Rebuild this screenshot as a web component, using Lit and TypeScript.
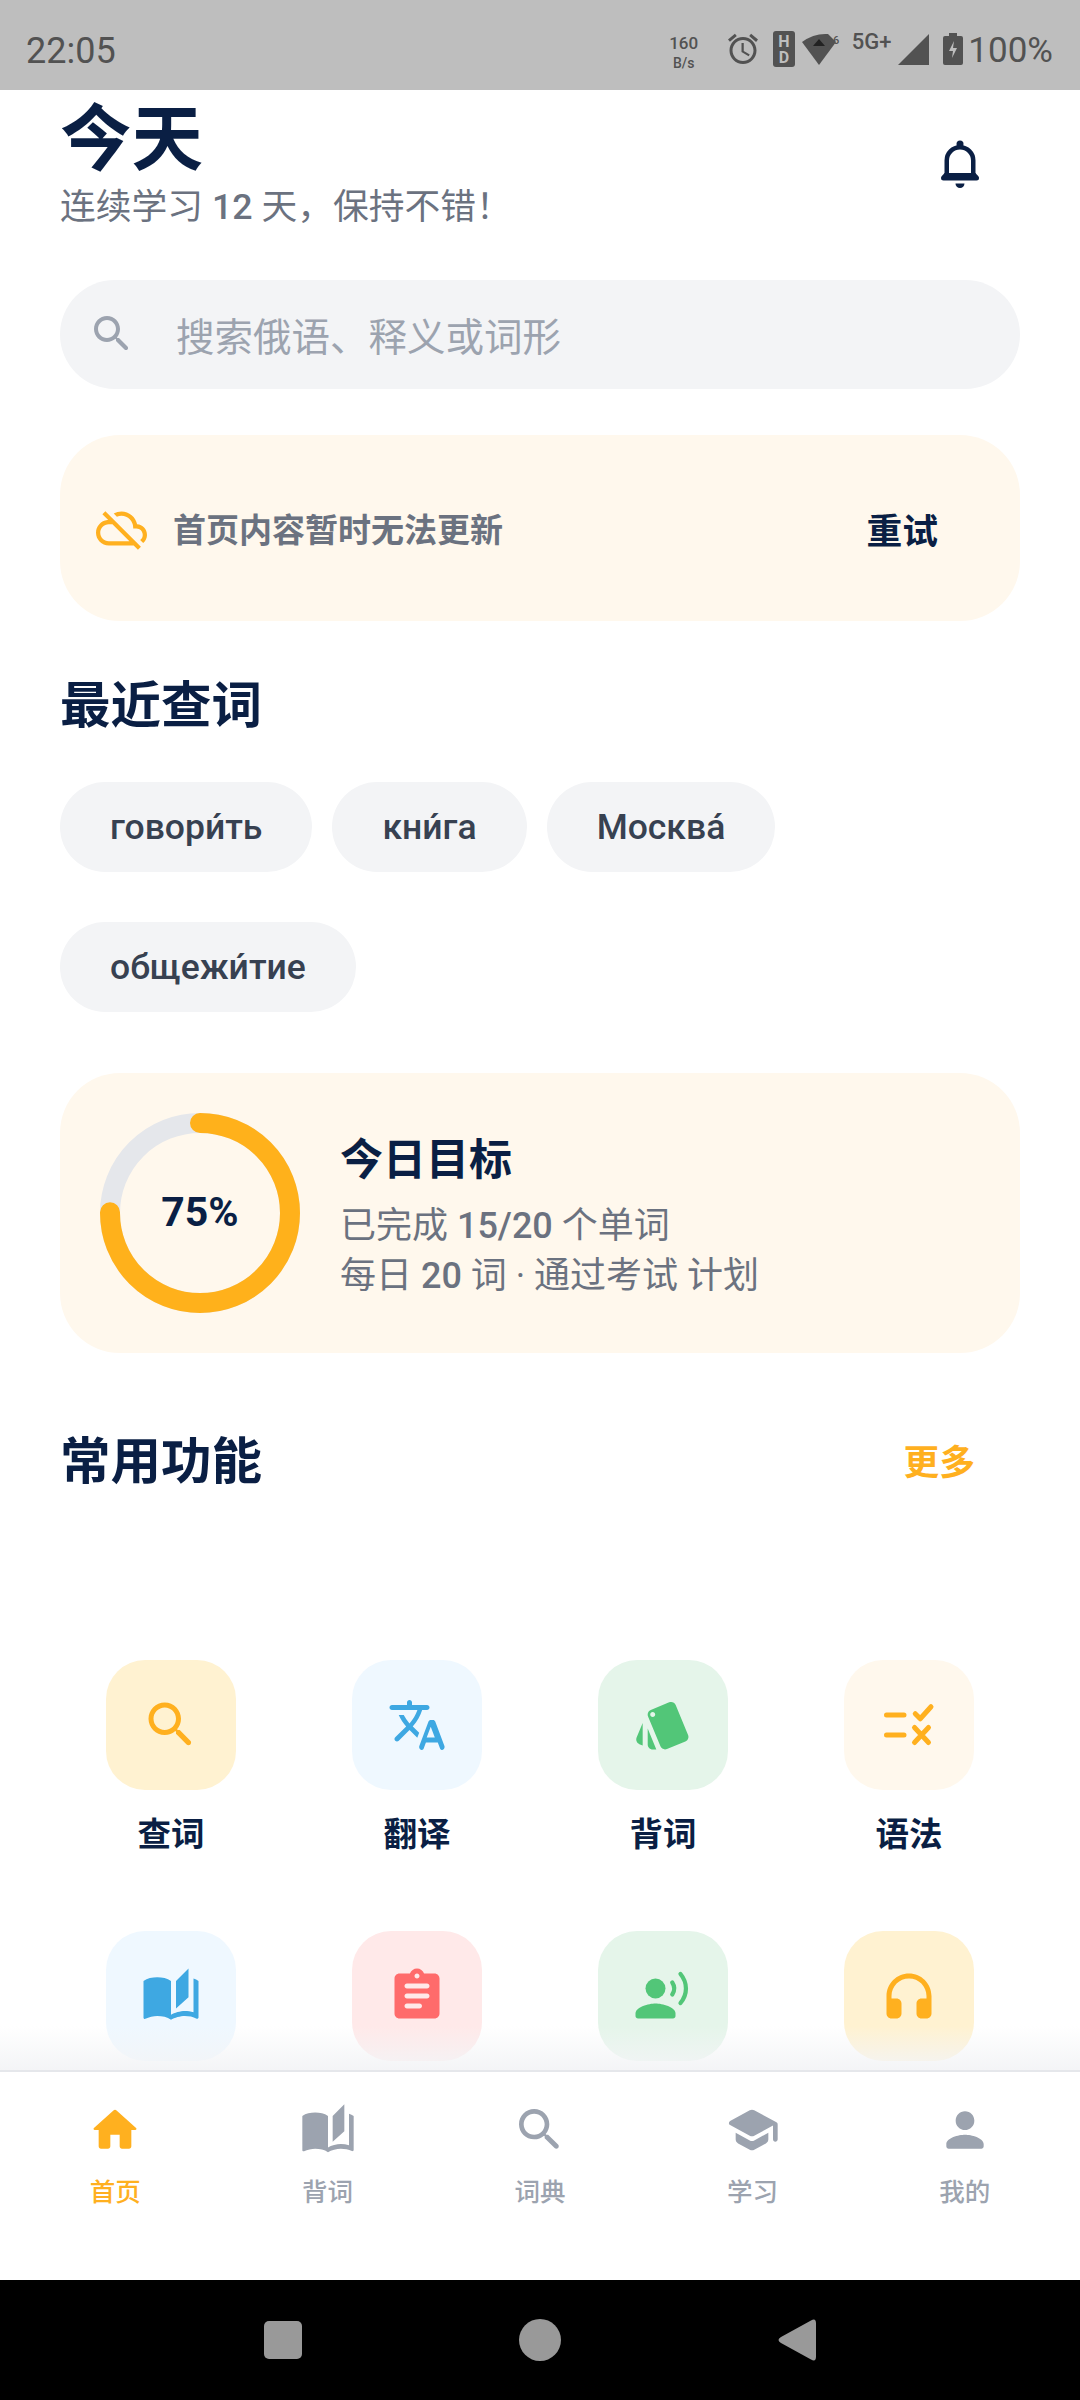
import { LitElement, html, css, svg } from "lit";
import { customElement } from "lit/decorators.js";

const ICONS: Record<string, unknown> = {
  search: svg`<path d="M15.5 14h-.79l-.28-.27C15.41 12.59 16 11.11 16 9.5 16 5.91 13.09 3 9.5 3S3 5.91 3 9.5 5.91 16 9.5 16c1.61 0 3.09-.59 4.23-1.57l.27.28v.79l4.25 4.25c.41.41 1.08.41 1.49 0 .41-.41.41-1.08 0-1.49L15.5 14zm-6 0C7.01 14 5 11.99 5 9.5S7.01 5 9.5 5 14 7.01 14 9.5 11.99 14 9.5 14z"/>`,
  cloudOff: svg`<path d="M24 15c0-2.64-2.05-4.78-4.65-4.96C18.67 6.59 15.64 4 12 4c-1.33 0-2.57.36-3.65.97l1.49 1.49C10.51 6.17 11.23 6 12 6c3.04 0 5.5 2.46 5.5 5.5v.5H19c1.66 0 3 1.34 3 3 0 .99-.48 1.85-1.21 2.4l1.41 1.41c1.09-.92 1.8-2.27 1.8-3.81zM4.41 3.86L3 5.27l2.77 2.77h-.42C2.34 8.36 0 10.91 0 14c0 3.31 2.69 6 6 6h11.73l2 2 1.41-1.41L4.41 3.86zM6 18c-2.21 0-4-1.79-4-4s1.79-4 4-4h1.73l8 8H6z"/>`,
  translate: svg`<path d="M12.87 15.07l-2.54-2.51.03-.03c1.74-1.94 2.98-4.17 3.71-6.53H16c.55 0 1-.45 1-1s-.45-.99-1-.99h-6V3c0-.55-.45-1-1-1s-1 .45-1 1v1H2c-.55 0-1 .45-1 1s.45.99 1 .99h10.17C11.5 7.92 10.44 9.75 9 11.35 8.07 10.32 7.3 9.19 6.69 8h-2c.73 1.63 1.73 3.17 2.98 4.56l-4.38 4.32c-.4.39-.4 1.03 0 1.42.39.39 1.02.39 1.42 0L9 14l3.11 3.11.76-2.04zM17.5 10c-.4 0-.76.25-.9.63l-3.67 9.8c-.24.61.22 1.57.87 1.57.39 0 .74-.24.88-.61l.89-2.39h4.75l.9 2.39c.14.37.49.61.88.61.65 0 1.11-.96.87-1.57l-3.67-9.8c-.14-.38-.5-.63-.9-.63h-.9zm-1.62 7l1.62-4.33L19.12 17h-3.24z"/>`,
  style: svg`<path d="M2.53 19.65l1.34.56v-9.03l-2.43 5.86c-.41 1.02.08 2.19 1.09 2.61zm19.5-3.7L17.07 3.98c-.31-.75-1.04-1.21-1.81-1.23-.26 0-.53.04-.79.15L7.1 5.95c-.75.31-1.21 1.03-1.23 1.8-.01.27.04.54.15.8l4.96 11.97c.31.76 1.05 1.22 1.83 1.23.26 0 .52-.05.77-.15l7.36-3.05c1.02-.42 1.51-1.59 1.09-2.6zM7.88 8.75c-.55 0-1-.45-1-1s.45-1 1-1 1 .45 1 1-.45 1-1 1zm-2 11c0 1.1.9 2 2 2h1.45l-3.45-8.34v6.34z"/>`,
  rule: svg`<path fill="none" stroke="currentColor" stroke-width="2" stroke-linecap="round" stroke-linejoin="round" d="M3 8h7M3 16h7M14.5 7.5l2 2 4.3-4.8M14.2 13l5.6 6M19.8 13l-5.6 6"/>`,
  stories: svg`<path d="M19 1l-5 5v11l5-4.5V1zM1 6v14.65c0 .25.25.5.5.5.1 0 .15-.05.25-.05C3.1 20.45 5.05 20 6.5 20c1.95 0 4.05.4 5.5 1.5V6c-1.45-1.1-3.55-1.5-5.5-1.5S2.45 4.9 1 6zm22 13.5V6c-.6-.45-1.25-.75-2-1v13.5c-1.1-.35-2.3-.5-3.5-.5-1.7 0-4.15.65-5.5 1.5v2c1.35-.85 3.8-1.5 5.5-1.5 1.65 0 3.35.3 4.75 1.05.1.05.15.05.25.05.25 0 .5-.25.5-.5v-1.1z"/>`,
  assignment: svg`<path fill-rule="evenodd" d="M19 3h-4.18C14.4 1.84 13.3 1 12 1c-1.3 0-2.4.84-2.82 2H5c-1.1 0-2 .9-2 2v14c0 1.1.9 2 2 2h14c1.1 0 2-.9 2-2V5c0-1.1-.9-2-2-2zm-7 0c.55 0 1 .45 1 1s-.45 1-1 1-1-.45-1-1 .45-1 1-1zM8 7h8c.55 0 1 .45 1 1s-.45 1-1 1H8c-.55 0-1-.45-1-1s.45-1 1-1zm0 4h8c.55 0 1 .45 1 1s-.45 1-1 1H8c-.55 0-1-.45-1-1s.45-1 1-1zm0 4h5c.55 0 1 .45 1 1s-.45 1-1 1H8c-.55 0-1-.45-1-1s.45-1 1-1z"/>`,
  voice: svg`<circle cx="9" cy="9" r="4"/><path d="M9 15c-2.67 0-8 1.34-8 4v1c0 .55.45 1 1 1h14c.55 0 1-.45 1-1v-1c0-2.66-5.33-4-8-4z"/><path fill="none" stroke="currentColor" stroke-width="1.7" stroke-linecap="round" d="M15.7 6.6c1 1.5 1 3.3 0 4.8M19 3.2c2.9 3.5 2.9 8.1 0 11.6"/>`,
  headphones: svg`<path d="M12 3c-4.97 0-9 4.03-9 9v7c0 1.1.9 2 2 2h2c1.1 0 2-.9 2-2v-4c0-1.1-.9-2-2-2H5v-1c0-3.87 3.13-7 7-7s7 3.13 7 7v1h-2c-1.1 0-2 .9-2 2v4c0 1.1.9 2 2 2h2c1.1 0 2-.9 2-2v-7c0-4.97-4.03-9-9-9z"/>`,
  home: svg`<path d="M10 19v-5h4v5c0 .55.45 1 1 1h3c.55 0 1-.45 1-1v-7h1.7c.46 0 .68-.57.33-.87L12.67 3.6c-.38-.34-.96-.34-1.34 0l-8.36 7.53c-.34.3-.13.87.33.87H5v7c0 .55.45 1 1 1h3c.55 0 1-.45 1-1z"/>`,
  school: svg`<path d="M5 13.18v2.81c0 .73.4 1.41 1.04 1.76l5 2.73c.6.33 1.32.33 1.92 0l5-2.73c.64-.35 1.04-1.03 1.04-1.76v-2.81l-6.04 3.3c-.6.33-1.32.33-1.92 0L5 13.18zm6.04-9.66l-8.43 4.6c-.69.38-.69 1.38 0 1.76l8.43 4.6c.6.33 1.32.33 1.92 0L21 10.09V16c0 .55.45 1 1 1s1-.45 1-1V9.59c0-.37-.2-.7-.52-.88l-9.52-5.19c-.6-.32-1.32-.32-1.92 0z"/>`,
  person: svg`<path d="M12 12c2.21 0 4-1.79 4-4s-1.79-4-4-4-4 1.79-4 4 1.79 4 4 4zm0 2c-2.67 0-8 1.34-8 4v1c0 .55.45 1 1 1h14c.55 0 1-.45 1-1v-1c0-2.66-5.33-4-8-4z"/>`,
  alarm: svg`<path d="M22 5.72l-4.6-3.86-1.29 1.53 4.6 3.86L22 5.72zM7.88 3.39L6.6 1.86 2 5.71l1.29 1.53 4.59-3.85zM12.5 8H11v6l4.75 2.85.75-1.23-4-2.37V8zM12 4c-4.97 0-9 4.03-9 9s4.02 9 9 9c4.97 0 9-4.03 9-9s-4.03-9-9-9zm0 16c-3.87 0-7-3.13-7-7s3.13-7 7-7 7 3.13 7 7-3.13 7-7 7z"/>`,
};

const icon = (name: string) =>
  html`<svg class="icon" viewBox="0 0 24 24" fill="currentColor">${ICONS[name]}</svg>`;

const CHIPS = ["говори́ть", "кни́га", "Москва́", "общежи́тие"];

// the second row's labels sit behind the tab bar in this scroll position
const FEATURES = [
  { label: "查词", icon: "search", tile: "#fff2d1", color: "#ffb01f" },
  { label: "翻译", icon: "translate", tile: "#eff8ff", color: "#3ea8e2" },
  { label: "背词", icon: "style", tile: "#e5f5ea", color: "#52c678" },
  { label: "语法", icon: "rule", tile: "#fff8ed", color: "#ffb01f" },
  { label: "", icon: "stories", tile: "#eff8ff", color: "#3ea8e2" },
  { label: "", icon: "assignment", tile: "#ffe9e9", color: "#ff6b6b" },
  { label: "", icon: "voice", tile: "#e5f5ea", color: "#52c678" },
  { label: "", icon: "headphones", tile: "#fff2d1", color: "#ffb01f" },
];

const TABS = [
  { label: "首页", icon: "home", active: true },
  { label: "背词", icon: "stories" },
  { label: "词典", icon: "search" },
  { label: "学习", icon: "school" },
  { label: "我的", icon: "person" },
];

@customElement("app-root")
export class AppRoot extends LitElement {
  static styles = css`
    :host {
      display: flex;
      flex-direction: column;
      width: 1080px;
      height: 2400px;
      overflow: hidden;
      background: #fff;
      font-family: Roboto, "Noto Sans CJK SC", sans-serif;
      color: #0a1f44;
    }
    .icon {
      display: block;
      width: 100%;
      height: 100%;
    }
    .num {
      font-weight: 500;
    }

    /* status bar */
    .status {
      flex: none;
      height: 90px;
      background: #bebebe;
      color: #525252;
      display: flex;
      align-items: center;
      justify-content: space-between;
      padding: 8px 27px 0 26px;
      box-sizing: border-box;
    }
    .time {
      font-size: 36px;
      line-height: 50px;
      margin-top: 4px;
    }
    .sys {
      display: flex;
      align-items: center;
    }
    .speed {
      width: 30px;
      text-align: center;
      font-weight: 500;
      font-size: 17px;
      line-height: 20px;
      margin-top: 8px;
    }
    .speed div + div {
      font-size: 14px;
    }
    .alarm {
      width: 36px;
      height: 36px;
      margin-left: 26px;
    }
    .hd {
      display: block;
      width: 22px;
      height: 36px;
      margin-left: 12px;
    }
    .wedge {
      display: block;
      width: 38px;
      height: 32px;
      margin-left: 7px;
    }
    .net {
      font-size: 22px;
      font-weight: 500;
      line-height: 22px;
      margin: -14px 0 0 12px;
    }
    .bars {
      display: block;
      width: 31px;
      height: 31px;
      margin-left: 7px;
    }
    .batt {
      display: block;
      width: 20px;
      height: 32px;
      margin-left: 14px;
    }
    .pct {
      font-size: 35px;
      line-height: 50px;
      margin: 4px 0 0 5px;
    }

    /* scrolling content */
    .main {
      flex: 1;
      min-height: 0;
      position: relative;
      overflow: hidden;
      padding: 8px 60px 0;
    }
    .fade {
      position: absolute;
      left: 0;
      right: 0;
      bottom: 0;
      height: 44px;
      background: linear-gradient(rgba(243, 244, 246, 0), rgba(243, 244, 246, 0.95));
    }
    .head {
      display: flex;
      justify-content: space-between;
    }
    h1 {
      margin: 0;
      font-size: 71.5px;
      line-height: 84px;
      font-weight: 700;
    }
    .sub {
      font-size: 35.75px;
      line-height: 50px;
      color: #6b7280;
    }
    .bell {
      display: block;
      width: 38px;
      height: 48px;
      margin: 42px 41px 0 0;
      color: #0a1f44;
    }
    .search {
      margin-top: 48px;
      height: 109px;
      box-sizing: border-box;
      padding: 0 0 2px 28px;
      border-radius: 55px;
      background: #f3f4f6;
      display: flex;
      align-items: center;
      color: #9ca3af;
      font-size: 38.5px;
    }
    .search .glyph {
      width: 48px;
      height: 48px;
      margin-right: 40px;
    }
    .banner {
      margin-top: 46px;
      height: 186px;
      border-radius: 60px;
      background: #fff8ed;
      display: flex;
      align-items: center;
      padding: 0 82px 0 36px;
      font-size: 33px;
      font-weight: 700;
      color: #6b7280;
    }
    .banner .glyph {
      width: 51px;
      height: 51px;
      color: #ffb01f;
      margin-right: 26px;
    }
    .banner .msg {
      flex: 1;
    }
    .banner .retry {
      font-size: 35.75px;
      font-weight: 700;
      color: #0a1f44;
    }
    h2 {
      margin: 0;
      font-size: 50.5px;
      line-height: 64px;
      font-weight: 700;
    }
    .recent {
      margin-top: 53px;
    }
    .chips {
      margin-top: 44px;
      display: flex;
      flex-wrap: wrap;
      gap: 50px 20px;
    }
    .chip {
      height: 90px;
      line-height: 90px;
      padding: 0 50px;
      border-radius: 45px;
      background: #f3f4f6;
      font-size: 35.5px;
      font-weight: 500;
      color: #374151;
    }
    .goal {
      margin-top: 61px;
      height: 280px;
      border-radius: 60px;
      background: #fff8ed;
      display: flex;
      align-items: center;
      padding-left: 40px;
    }
    .ring {
      position: relative;
      width: 200px;
      height: 200px;
      margin-right: 40px;
    }
    .ring svg {
      display: block;
    }
    .ring span {
      position: absolute;
      inset: 0 0 2px;
      display: flex;
      align-items: center;
      justify-content: center;
      font-size: 41px;
      font-weight: 700;
    }
    .goal h3 {
      margin: 6px 0 13px;
      font-size: 43px;
      line-height: 56px;
      font-weight: 700;
    }
    .goal p {
      margin: 0;
      font-size: 36px;
      line-height: 50px;
      color: #6b7280;
    }
    .section {
      margin-top: 77px;
      display: flex;
      justify-content: space-between;
      align-items: center;
    }
    .more {
      font-size: 35.75px;
      font-weight: 700;
      color: #ffb01f;
      margin: 0 45px 5px 0;
    }
    .grid {
      margin: 166px -12px 0;
      display: grid;
      grid-template-columns: repeat(4, 1fr);
      row-gap: 71px;
    }
    .cell {
      display: flex;
      flex-direction: column;
      align-items: center;
      height: 200px;
    }
    .tile {
      width: 130px;
      height: 130px;
      border-radius: 39px;
      display: flex;
      align-items: center;
      justify-content: center;
    }
    .tile .glyph {
      width: 60px;
      height: 60px;
    }
    .cell .name {
      margin-top: 24px;
      font-size: 33.5px;
      line-height: 42px;
      font-weight: 700;
    }

    /* bottom tabs */
    .tabs {
      flex: none;
      height: 210px;
      box-sizing: border-box;
      border-top: 2px solid #e5e7eb;
      background: #fff;
      display: grid;
      grid-template-columns: repeat(5, 1fr);
      padding: 30px 9px 0;
      color: #9ca3af;
    }
    .tab {
      display: flex;
      flex-direction: column;
      align-items: center;
    }
    .tab.on {
      color: #ffb01f;
    }
    .tab .glyph {
      width: 56px;
      height: 56px;
    }
    .tab .name {
      margin-top: 16px;
      font-size: 25.5px;
      line-height: 36px;
      font-weight: 500;
    }

    /* android nav */
    .nav {
      flex: none;
      height: 120px;
      background: #000;
      display: flex;
      align-items: center;
      justify-content: center;
      gap: 217px;
    }
    .nav .sq {
      width: 38px;
      height: 38px;
      border-radius: 5px;
      background: #999;
    }
    .nav .dot {
      width: 42px;
      height: 42px;
      border-radius: 50%;
      background: #999;
    }
    .nav svg {
      display: block;
      width: 38px;
      height: 42px;
    }
  `;

  renderStatus() {
    return html`<div class="status">
      <div class="time">22:05</div>
      <div class="sys">
        <div class="speed"><div>160</div><div>B/s</div></div>
        <div class="alarm">${icon("alarm")}</div>
        <svg class="hd" viewBox="0 0 22 36">
          <rect width="22" height="36" rx="3" fill="#525252" />
          <text x="11" y="16" text-anchor="middle" font-size="16" font-weight="700" fill="#bebebe">H</text>
          <text x="11" y="32" text-anchor="middle" font-size="16" font-weight="700" fill="#bebebe">D</text>
        </svg>
        <svg class="wedge" viewBox="0 0 38 32">
          <path d="M0 9Q12 0 26 1L34 9 17 32Z" fill="#525252" />
          <path d="M17 6l6 7H11Z" fill="#222" />
          <text x="31" y="11" font-size="11" font-weight="500" fill="#525252">6</text>
        </svg>
        <div class="net">5G+</div>
        <svg class="bars" viewBox="0 0 31 31"><path d="M31 0V31H0Z" fill="#525252" /></svg>
        <svg class="batt" viewBox="0 0 20 32">
          <path d="M6 0h8v3h4q2 0 2 2v25q0 2-2 2H2q-2 0-2-2V5q0-2 2-2h4Z" fill="#525252" />
          <path d="M11 8l-5 10h4l-1 7 5-10h-4Z" fill="#bebebe" />
        </svg>
        <div class="pct">100%</div>
      </div>
    </div>`;
  }

  renderGoal() {
    const r = 90;
    const len = 2 * Math.PI * r;
    return html`<div class="goal">
      <div class="ring">
        <svg width="200" height="200" viewBox="0 0 200 200">
          <circle cx="100" cy="100" r=${r} fill="none" stroke="#e5e7eb" stroke-width="20" />
          <circle
            cx="100" cy="100" r=${r} fill="none" stroke="#ffb11b" stroke-width="20"
            stroke-linecap="round" stroke-dasharray="${len * 0.75} ${len}"
            transform="rotate(-90 100 100)"
          />
        </svg>
        <span>75%</span>
      </div>
      <div>
        <h3>今日目标</h3>
        <p>已完成 <span class="num">15/20</span> 个单词</p>
        <p>每日 <span class="num">20</span> 词 · 通过考试 计划</p>
      </div>
    </div>`;
  }

  render() {
    return html`
      ${this.renderStatus()}
      <div class="main">
        <div class="head">
          <div>
            <h1>今天</h1>
            <div class="sub">连续学习 <span class="num">12</span> 天，保持不错！</div>
          </div>
          <svg class="bell" viewBox="0 0 38 48" fill="currentColor">
            <circle cx="19" cy="4" r="3.5" />
            <path d="M5.75 35V20.5a13.25 13.25 0 0 1 26.5 0V35" fill="none" stroke="currentColor" stroke-width="4.5" />
            <path d="M3.5 33L1 36H37L34.5 33Z" />
            <rect y="35.5" width="38" height="5" rx="2.5" />
            <path d="M14.5 43.5h9a4.5 4.5 0 0 1-9 0Z" />
          </svg>
        </div>
        <div class="search">
          <div class="glyph">${icon("search")}</div>
          搜索俄语、释义或词形
        </div>
        <div class="banner">
          <div class="glyph">${icon("cloudOff")}</div>
          <div class="msg">首页内容暂时无法更新</div>
          <div class="retry">重试</div>
        </div>
        <h2 class="recent">最近查词</h2>
        <div class="chips">${CHIPS.map((c) => html`<div class="chip">${c}</div>`)}</div>
        ${this.renderGoal()}
        <div class="section">
          <h2>常用功能</h2>
          <div class="more">更多</div>
        </div>
        <div class="grid">
          ${FEATURES.map(
            (f) => html`<div class="cell">
              <div class="tile" style="background:${f.tile};color:${f.color}">
                <div class="glyph">${icon(f.icon)}</div>
              </div>
              ${f.label ? html`<div class="name">${f.label}</div>` : ""}
            </div>`
          )}
        </div>
        <div class="fade"></div>
      </div>
      <div class="tabs">
        ${TABS.map(
          (t) => html`<div class="tab ${t.active ? "on" : ""}">
            <div class="glyph">${icon(t.icon)}</div>
            <div class="name">${t.label}</div>
          </div>`
        )}
      </div>
      <div class="nav">
        <div class="sq"></div>
        <div class="dot"></div>
        <svg viewBox="0 0 38 42"><path d="M33 1.5q5-3 5 3v33q0 6-5 3L3 24q-5-3 0-6Z" fill="#999" /></svg>
      </div>
    `;
  }
}
